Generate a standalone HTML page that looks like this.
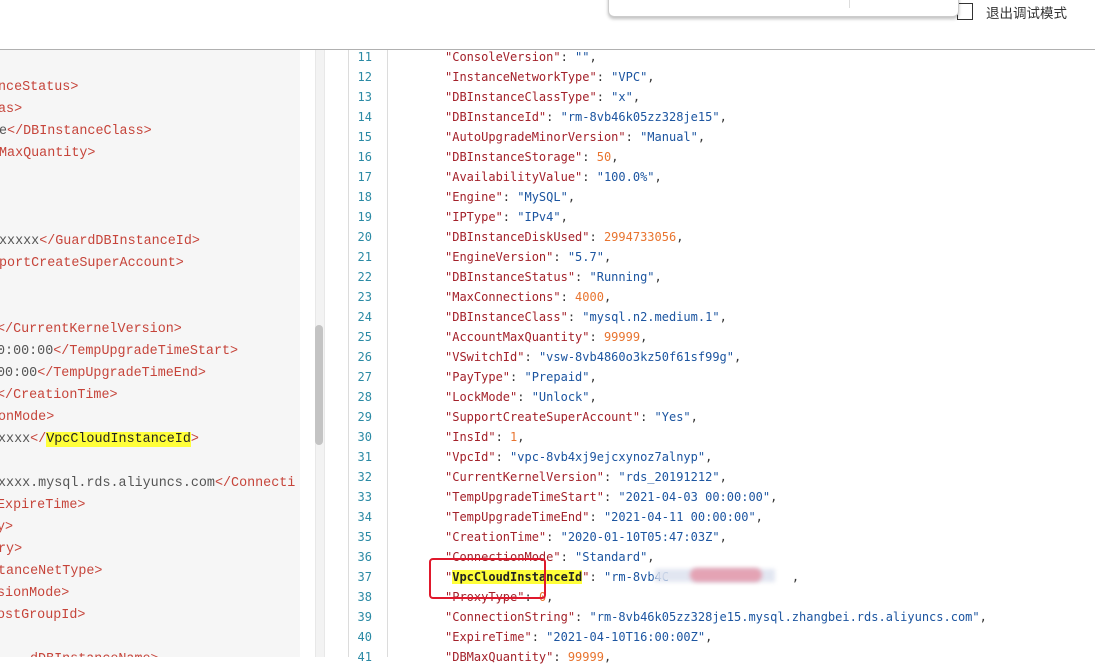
<!DOCTYPE html>
<html><head><meta charset="utf-8"><style>
body{margin:0;width:1095px;height:657px;overflow:hidden;background:#fff;position:relative;font-family:"Liberation Sans","Noto Sans CJK SC",sans-serif}
.top{position:absolute;left:0;top:0;width:1095px;height:49px;background:#fff;border-bottom:1px solid #b0b0b0}
.pop{position:absolute;left:608px;top:-10px;width:349px;height:25px;background:#fff;border:1px solid #ccc;border-radius:0 0 6px 6px;box-shadow:0 2px 3px rgba(0,0,0,.25);z-index:3}
.pop i{position:absolute;left:240px;top:0;width:1px;height:17px;background:#ddd}
.cb{position:absolute;left:957px;top:3px;width:14px;height:15px;border:1px solid #333;background:#fff}
.lbl{position:absolute;left:986px;top:2px;font-size:13.5px;color:#333}
.left{position:absolute;left:0;top:50px;width:300px;height:607px;background:#f6f6f6;overflow:hidden}
.l{position:absolute;white-space:pre;font-family:"Liberation Mono",monospace;font-size:13.4px;line-height:22px;color:#555}
.t{color:#c6443a}
.hl{background:#ffff3a;color:#222}
.track{position:absolute;left:315px;top:50px;width:8px;height:607px;background:#f3f3f3;border-left:1px solid #e8e8e8;border-right:1px solid #e8e8e8}
.thumb{position:absolute;left:315px;top:325px;width:8px;height:120px;background:#c4c4c4;border-radius:4px}
.g1{position:absolute;left:348px;top:50px;width:1px;height:607px;background:#dcdcdc}
.g2{position:absolute;left:387px;top:50px;width:1px;height:607px;background:#dcdcdc}
.nums{position:absolute;left:350px;top:47px;width:22px;text-align:right;font-family:"DejaVu Sans Mono",monospace;font-size:12px;line-height:20px;color:#2b8aa5;white-space:pre}
.code{position:absolute;left:445px;top:47px;font-family:"DejaVu Sans Mono",monospace;font-size:12px;line-height:20px;color:#333;white-space:pre}
.k{color:#a3212a}.s{color:#1c55a0}.n{color:#e8742f}
.box{position:absolute;left:429px;top:558px;width:113px;height:37px;border:2px solid #e0182c;border-radius:4px}
.blur1{position:absolute;left:655px;top:569px;width:120px;height:13px;background:#dfe4f0;filter:blur(2px);opacity:.9}
.blur2{position:absolute;left:690px;top:568px;width:72px;height:14px;background:#e4a3b4;filter:blur(2px);border-radius:7px}
</style></head><body>
<div class="top"></div>
<div class="pop"><i></i></div>
<div class="cb"></div>
<div class="lbl">退出调试模式</div>
<div class="left">
<div class="l t" style="left:-2px;top:27px">nceStatus&gt;</div>
<div class="l t" style="left:-2px;top:49px">as&gt;</div>
<div class="l" style="left:-1px;top:71px">e<span class="t">&lt;/DBInstanceClass&gt;</span></div>
<div class="l t" style="left:-1px;top:93px">MaxQuantity&gt;</div>
<div class="l" style="left:-1px;top:181px">xxxxx<span class="t">&lt;/GuardDBInstanceId&gt;</span></div>
<div class="l t" style="left:-1px;top:203px">portCreateSuperAccount&gt;</div>
<div class="l t" style="left:-3px;top:269px">&lt;/CurrentKernelVersion&gt;</div>
<div class="l" style="left:-3px;top:291px">0:00:00<span class="t">&lt;/TempUpgradeTimeStart&gt;</span></div>
<div class="l" style="left:-3px;top:313px">00:00<span class="t">&lt;/TempUpgradeTimeEnd&gt;</span></div>
<div class="l t" style="left:-3px;top:335px">&lt;/CreationTime&gt;</div>
<div class="l t" style="left:-2px;top:357px">onMode&gt;</div>
<div class="l" style="left:-2px;top:379px">xxxx<span class="t">&lt;/</span><span class="hl">VpcCloudInstanceId</span><span class="t">&gt;</span></div>
<div class="l" style="left:-2px;top:423px">xxxx.mysql.rds.aliyuncs.com<span class="t">&lt;/Connecti</span></div>
<div class="l t" style="left:-3px;top:445px">ExpireTime&gt;</div>
<div class="l t" style="left:-3px;top:467px">y&gt;</div>
<div class="l t" style="left:-2px;top:489px">ry&gt;</div>
<div class="l t" style="left:-2px;top:511px">tanceNetType&gt;</div>
<div class="l t" style="left:-3px;top:533px">sionMode&gt;</div>
<div class="l t" style="left:-3px;top:555px">ostGroupId&gt;</div>
<div class="l t" style="left:30px;top:599px">dDBInstanceName&gt;</div>
</div>
<div class="track"></div><div class="thumb"></div>
<div class="g1"></div><div class="g2"></div>
<div class="nums">11
12
13
14
15
16
17
18
19
20
21
22
23
24
25
26
27
28
29
30
31
32
33
34
35
36
37
38
39
40
41</div>
<div class="code"><span class="k">"ConsoleVersion"</span>: <span class="s">""</span>,
<span class="k">"InstanceNetworkType"</span>: <span class="s">"VPC"</span>,
<span class="k">"DBInstanceClassType"</span>: <span class="s">"x"</span>,
<span class="k">"DBInstanceId"</span>: <span class="s">"rm-8vb46k05zz328je15"</span>,
<span class="k">"AutoUpgradeMinorVersion"</span>: <span class="s">"Manual"</span>,
<span class="k">"DBInstanceStorage"</span>: <span class="n">50</span>,
<span class="k">"AvailabilityValue"</span>: <span class="s">"100.0%"</span>,
<span class="k">"Engine"</span>: <span class="s">"MySQL"</span>,
<span class="k">"IPType"</span>: <span class="s">"IPv4"</span>,
<span class="k">"DBInstanceDiskUsed"</span>: <span class="n">2994733056</span>,
<span class="k">"EngineVersion"</span>: <span class="s">"5.7"</span>,
<span class="k">"DBInstanceStatus"</span>: <span class="s">"Running"</span>,
<span class="k">"MaxConnections"</span>: <span class="n">4000</span>,
<span class="k">"DBInstanceClass"</span>: <span class="s">"mysql.n2.medium.1"</span>,
<span class="k">"AccountMaxQuantity"</span>: <span class="n">99999</span>,
<span class="k">"VSwitchId"</span>: <span class="s">"vsw-8vb4860o3kz50f61sf99g"</span>,
<span class="k">"PayType"</span>: <span class="s">"Prepaid"</span>,
<span class="k">"LockMode"</span>: <span class="s">"Unlock"</span>,
<span class="k">"SupportCreateSuperAccount"</span>: <span class="s">"Yes"</span>,
<span class="k">"InsId"</span>: <span class="n">1</span>,
<span class="k">"VpcId"</span>: <span class="s">"vpc-8vb4xj9ejcxynoz7alnyp"</span>,
<span class="k">"CurrentKernelVersion"</span>: <span class="s">"rds_20191212"</span>,
<span class="k">"TempUpgradeTimeStart"</span>: <span class="s">"2021-04-03 00:00:00"</span>,
<span class="k">"TempUpgradeTimeEnd"</span>: <span class="s">"2021-04-11 00:00:00"</span>,
<span class="k">"CreationTime"</span>: <span class="s">"2020-01-10T05:47:03Z"</span>,
<span class="k">"ConnectionMode"</span>: <span class="s">"Standard"</span>,
<span class="k">"</span><span class="hl" style="font-weight:bold">VpcCloudInstanceId</span><span class="k">"</span>: <span class="s">"rm-8vb4C                 </span>,
<span class="k">"ProxyType"</span>: <span class="n">0</span>,
<span class="k">"ConnectionString"</span>: <span class="s">"rm-8vb46k05zz328je15.mysql.zhangbei.rds.aliyuncs.com"</span>,
<span class="k">"ExpireTime"</span>: <span class="s">"2021-04-10T16:00:00Z"</span>,
<span class="k">"DBMaxQuantity"</span>: <span class="n">99999</span>,</div>
<div class="blur1"></div><div class="blur2"></div>
<div class="box"></div>
</body></html>
